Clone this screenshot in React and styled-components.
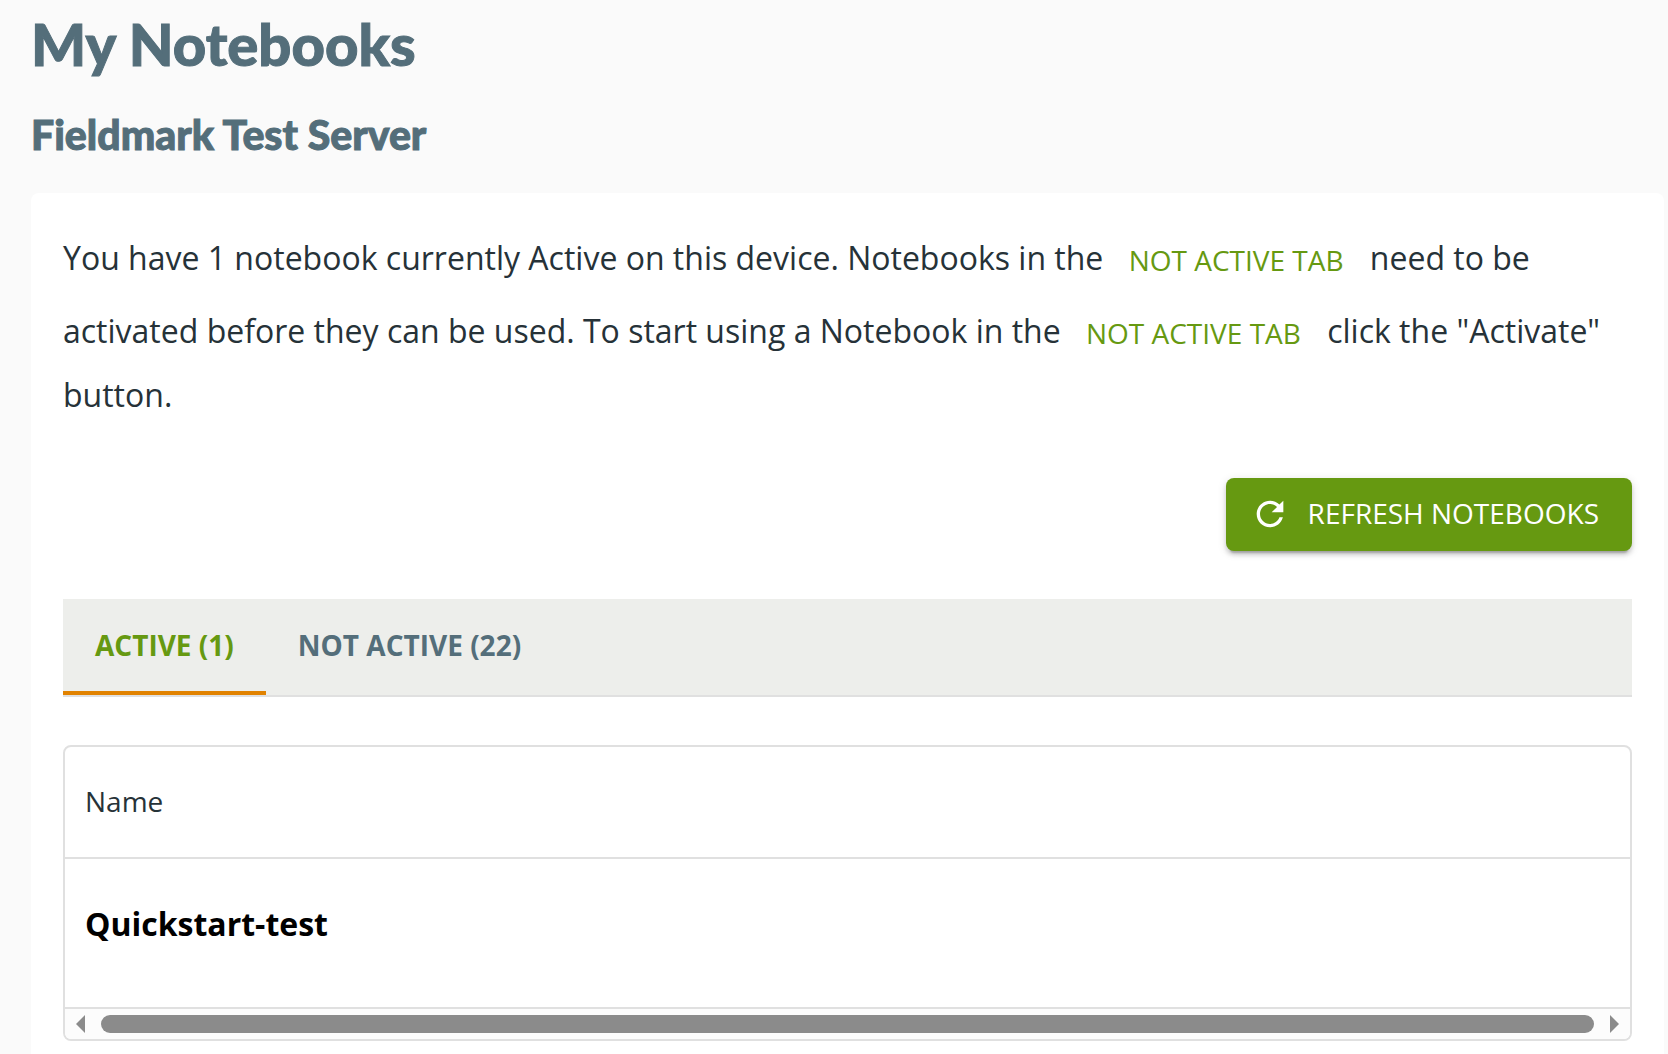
import React, { useState } from "react";
import styled, { createGlobalStyle } from "styled-components";

const GlobalStyle = createGlobalStyle`
  *, *::before, *::after { box-sizing: border-box; }
  body {
    margin: 0;
    background: #fafafa;
    color: #263238;
    font-family: "Open Sans", "Noto Sans", sans-serif;
    font-size: 32px;
    line-height: 48px;
    overflow: hidden;
  }
  button { font-family: inherit; }
`;

const Page = styled.main`
  min-height: 100vh;
  padding: 7px 4px 0 31px;
`;

const Title = styled.h1`
  margin: 0 0 22px;
  color: #546e7a;
  font-family: Lato, sans-serif;
  font-size: 58px;
  font-weight: 900;
  line-height: 74px;
  -webkit-text-stroke: 1px #546e7a;
`;

const Subtitle = styled.h2`
  margin: 0 0 26px;
  color: #546e7a;
  font-family: Lato, sans-serif;
  font-size: 41px;
  font-weight: 900;
  line-height: 64px;
  -webkit-text-stroke: 1px #546e7a;
`;

const Card = styled.section`
  min-height: 900px;
  padding: 32px;
  border-radius: 8px;
  background: #fff;
`;

const Intro = styled.p`
  margin: 0 0 59px;
`;

const BaseButton = styled.button`
  display: inline-flex;
  align-items: center;
  justify-content: center;
  border: 0;
  border-radius: 8px;
  font-size: 28px;
  font-weight: 500;
  line-height: 49px;
  text-transform: uppercase;
  cursor: pointer;
`;

const TextButton = styled(BaseButton)`
  padding: 11px 18px 13px 17px;
  background: transparent;
  color: #669911;
  vertical-align: middle;
`;

const Toolbar = styled.div`
  display: flex;
  justify-content: flex-end;
  margin-bottom: 48px;
`;

const RefreshButton = styled(BaseButton)`
  gap: 18px;
  padding: 11px 33px 13px 24px;
  background: #669911;
  color: #fff;
  box-shadow:
    0 6px 2px -4px rgba(0, 0, 0, 0.2),
    0 4px 4px 0 rgba(0, 0, 0, 0.14),
    0 2px 10px 0 rgba(0, 0, 0, 0.12);
`;

const Icon = styled.svg`
  width: 40px;
  height: 40px;
  fill: currentColor;
`;

const TabList = styled.div`
  display: flex;
  margin-bottom: 48px;
  border-bottom: 2px solid #e0e0e0;
  background: #edeeeb;
`;

const Tab = styled.button`
  height: 96px;
  padding: 0 32px;
  border: 0;
  border-bottom: 4px solid ${(p) => (p.$selected ? "#e18200" : "transparent")};
  background: transparent;
  color: ${(p) => (p.$selected ? "#669911" : "#546e7a")};
  font-size: 28px;
  font-weight: 700;
  line-height: 36px;
  text-transform: uppercase;
  cursor: pointer;
`;

const GridFrame = styled.div`
  overflow: hidden;
  border: 2px solid #e0e0e0;
  border-radius: 8px;
`;

const Table = styled.table`
  width: 100%;
  border-collapse: separate;
  border-spacing: 0;
`;

const HeadCell = styled.th`
  height: 112px;
  padding: 0 20px 2px;
  border-bottom: 2px solid #e0e0e0;
  font-size: 28px;
  font-weight: 500;
  line-height: 40px;
  text-align: left;
`;

const Cell = styled.td`
  height: 150px;
  padding: 0 20px 18px;
  border-bottom: 2px solid #e0e0e0;
  color: #000;
  font-weight: 700;
  line-height: 48px;
`;

const ScrollBar = styled.div`
  display: flex;
  align-items: center;
  gap: 16px;
  height: 30px;
  padding: 0 11px;
  background: #fcfcfc;
`;

const Arrow = styled.svg`
  width: 9px;
  height: 18px;
  fill: #8b8b8b;
`;

const Thumb = styled.div`
  flex: 1;
  height: 18px;
  border-radius: 9px;
  background: #8b8b8b;
`;

const notebooks = {
  active: ["Quickstart-test"],
  inactive: [],
};

export default function App() {
  const [tab, setTab] = useState("active");
  const openInactive = () => setTab("inactive");

  return (
    <>
      <GlobalStyle />
      <Page>
        <Title>My Notebooks</Title>
        <Subtitle>Fieldmark Test Server</Subtitle>
        <Card>
          <Intro>
            You have 1 notebook currently Active on this device. Notebooks in the{" "}
            <TextButton type="button" onClick={openInactive}>Not Active tab</TextButton>{" "}
            need to be activated before they can be used. To start using a Notebook in the{" "}
            <TextButton type="button" onClick={openInactive}>Not Active tab</TextButton>{" "}
            click the "Activate" button.
          </Intro>
          <Toolbar>
            <RefreshButton type="button">
              <Icon viewBox="0 0 24 24" aria-hidden="true">
                <path d="M17.65 6.35C16.2 4.9 14.21 4 12 4c-4.42 0-7.99 3.58-7.99 8s3.57 8 7.99 8c3.73 0 6.84-2.55 7.73-6h-2.08c-.82 2.33-3.04 4-5.65 4-3.31 0-6-2.69-6-6s2.69-6 6-6c1.66 0 3.14.69 4.22 1.78L13 11h7V4l-2.35 2.35z" />
              </Icon>
              Refresh Notebooks
            </RefreshButton>
          </Toolbar>
          <TabList role="tablist" aria-label="Notebooks">
            <Tab
              type="button"
              role="tab"
              aria-selected={tab === "active"}
              $selected={tab === "active"}
              onClick={() => setTab("active")}
            >
              Active (1)
            </Tab>
            <Tab
              type="button"
              role="tab"
              aria-selected={tab === "inactive"}
              $selected={tab === "inactive"}
              onClick={openInactive}
            >
              Not Active (22)
            </Tab>
          </TabList>
          <GridFrame>
            <Table>
              <thead>
                <tr>
                  <HeadCell scope="col">Name</HeadCell>
                </tr>
              </thead>
              <tbody>
                {notebooks[tab].map((name) => (
                  <tr key={name}>
                    <Cell>{name}</Cell>
                  </tr>
                ))}
              </tbody>
            </Table>
            <ScrollBar aria-hidden="true">
              <Arrow viewBox="0 0 9 18"><path d="M9 0v18L0 9z" /></Arrow>
              <Thumb />
              <Arrow viewBox="0 0 9 18"><path d="M0 0v18l9-9z" /></Arrow>
            </ScrollBar>
          </GridFrame>
        </Card>
      </Page>
    </>
  );
}
